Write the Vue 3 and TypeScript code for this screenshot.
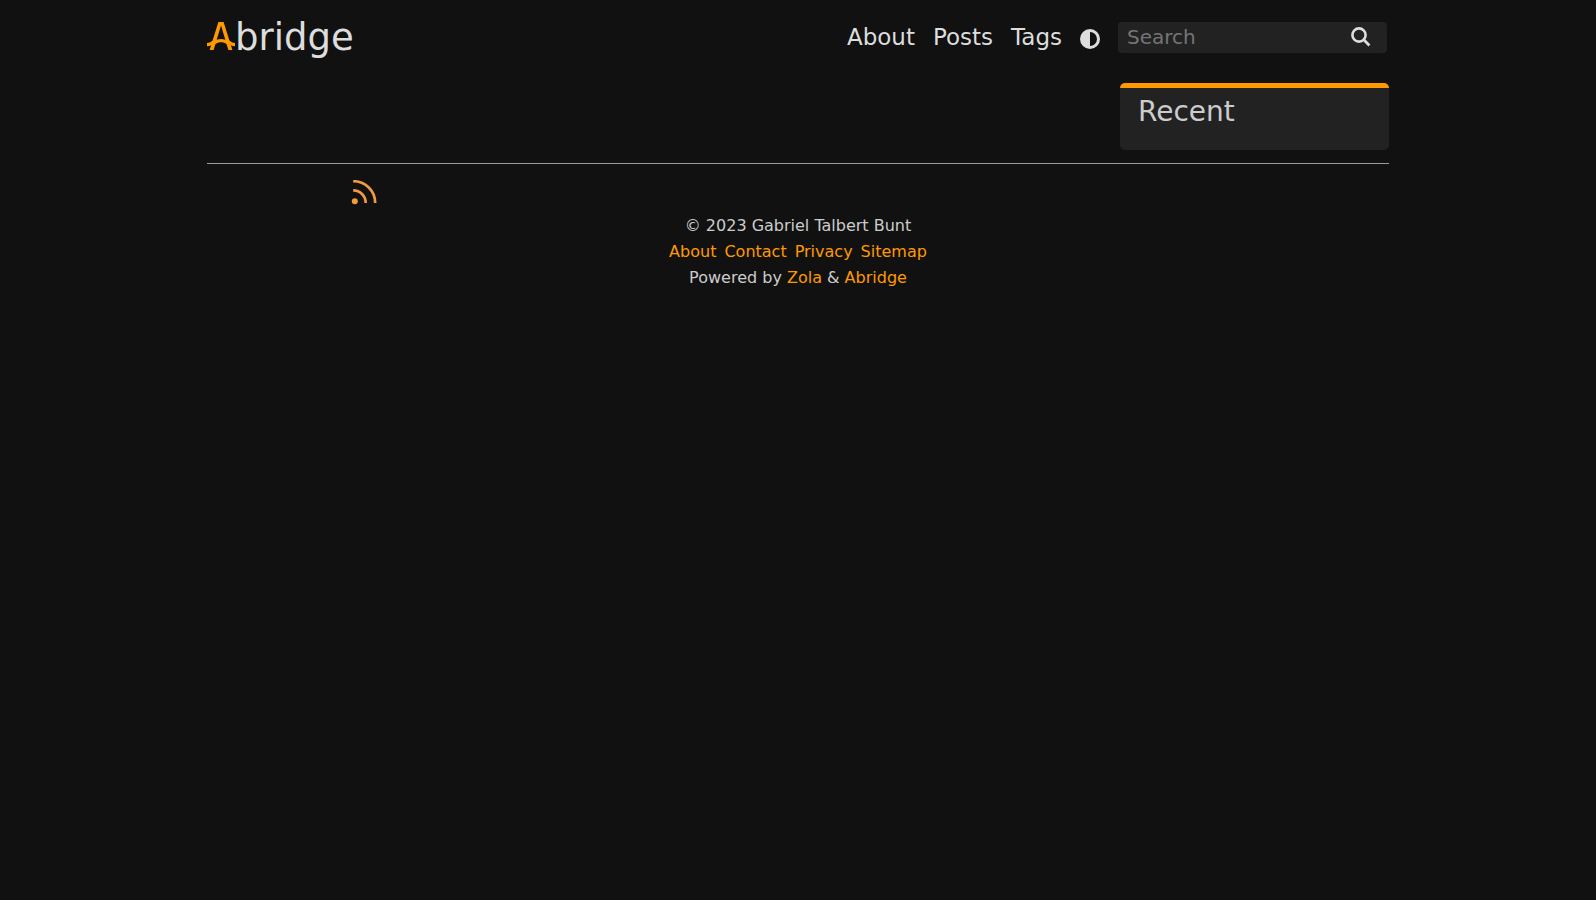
<script setup lang="ts">
import { ref } from 'vue'

interface NavLink {
  label: string
  href: string
}

const navLinks: NavLink[] = [
  { label: 'About', href: '#about' },
  { label: 'Posts', href: '#posts' },
  { label: 'Tags', href: '#tags' },
]

const footerLinks: NavLink[] = [
  { label: 'About', href: '#about' },
  { label: 'Contact', href: '#contact' },
  { label: 'Privacy', href: '#privacy' },
  { label: 'Sitemap', href: '#sitemap' },
]

const query = ref('')
</script>

<template>
  <div class="page">
    <header class="header">
      <a class="logo" href="#home" aria-label="Abridge">
        <svg class="logo-mark" viewBox="0 0 28 28" aria-hidden="true">
          <path fill="currentColor" d="M11.4 0 H16.6 L22.4 18.6 C24 20 25.8 20.8 28 21 V24.2 C26.4 24.2 25 23.8 23.9 23.2 L25.4 28 H21.4 L19.6 22.2 C16.4 19.6 11.6 19.6 8.4 22.2 L6.6 28 H2.6 L4.1 23.2 C3 23.8 1.6 24.2 0 24.2 V21 C2.2 20.8 4 20 5.6 18.6 Z M14 3.4 L9.7 17.8 C12.4 16.6 15.6 16.6 18.3 17.8 Z" fill-rule="evenodd" />
        </svg>
        <span>bridge</span>
      </a>
      <nav class="nav" aria-label="Main">
        <a v-for="link in navLinks" :key="link.label" :href="link.href">{{ link.label }}</a>
        <button class="theme" type="button" aria-label="Toggle theme">
          <svg viewBox="0 0 20 20" aria-hidden="true">
            <path fill="currentColor" fill-rule="evenodd" d="M10 0a10 10 0 1 0 0 20a10 10 0 0 0 0-20zM10 3a7 7 0 0 1 0 14z" />
          </svg>
        </button>
        <form class="search" role="search" @submit.prevent>
          <input v-model="query" type="search" placeholder="Search" aria-label="Search" />
          <button type="submit" aria-label="Submit search">
            <svg viewBox="0 0 20 20" aria-hidden="true">
              <circle cx="8" cy="8" r="6.6" fill="none" stroke="currentColor" stroke-width="2.6" />
              <path d="M12.6 12.6 L18.4 18.4" stroke="currentColor" stroke-width="2.8" />
            </svg>
          </button>
        </form>
      </nav>
    </header>

    <main class="main">
      <aside class="recent">
        <h2>Recent</h2>
      </aside>
    </main>

    <footer class="footer">
      <div class="feeds">
        <a href="#feed" aria-label="RSS feed">
          <svg viewBox="0 0 26 26" aria-hidden="true">
            <circle cx="3.8" cy="21.2" r="3" fill="currentColor" />
            <path d="M2.2 10.4 A12.5 12.5 0 0 1 14.7 22.9 M2.2 1.2 A22 21.7 0 0 1 24.2 22.9" fill="none" stroke="currentColor" stroke-width="2.7" />
          </svg>
        </a>
      </div>
      <p>© 2023 Gabriel Talbert Bunt</p>
      <nav class="footer-links" aria-label="Footer">
        <a v-for="link in footerLinks" :key="link.label" :href="link.href">{{ link.label }}</a>
      </nav>
      <p>Powered by <a href="#zola">Zola</a> &amp; <a href="#abridge">Abridge</a></p>
    </footer>
  </div>
</template>

<style>
body {
  background: #111;
}
</style>

<style scoped>
.page {
  box-sizing: border-box;
  max-width: 1182px;
  margin: 0 auto;
  color: #ccc;
  font: 16px/26px "DejaVu Sans", sans-serif;
}
a {
  color: #f90;
  text-decoration: none;
}
button {
  padding: 0;
  border: 0;
  background: none;
  color: #ddd;
  cursor: pointer;
}
svg {
  display: block;
}
.header {
  display: flex;
  align-items: center;
  justify-content: space-between;
  height: 75px;
}
.logo {
  display: flex;
  align-items: center;
  font-size: 37px;
  line-height: 42px;
}
.logo-mark {
  width: 28px;
  height: 28px;
  margin-bottom: 3px;
}
.logo span {
  color: #ddd;
}
.nav {
  display: flex;
  align-items: center;
  gap: 18px;
  margin-right: 2px;
}
.nav > a {
  padding-bottom: 2px;
  color: #ddd;
  font-size: 23px;
}
.theme {
  margin-top: 3px;
}
.theme svg {
  width: 20px;
  height: 20px;
}
.search {
  box-sizing: border-box;
  display: flex;
  align-items: center;
  width: 269px;
  height: 31px;
  padding: 0 16px 2px 9px;
  border-radius: 4px;
  background: #222;
}
.search input {
  flex: 1;
  min-width: 0;
  padding: 0;
  border: 0;
  outline: 0;
  background: none;
  color: #ddd;
  font: 20px/26px "DejaVu Sans", sans-serif;
}
.search input::placeholder {
  color: #757575;
}
.search svg {
  width: 20px;
  height: 20px;
}
.main {
  display: flex;
  justify-content: flex-end;
  padding: 8px 0 13px;
}
.recent {
  box-sizing: border-box;
  width: 269px;
  padding: 6px 18px 20px;
  border-top: 5px solid #f90;
  border-radius: 5px;
  background: #222;
}
.recent h2 {
  margin: 0;
  font-size: 28px;
  font-weight: 400;
  line-height: 36px;
}
.footer {
  border-top: 1px solid #999;
  text-align: center;
}
.feeds {
  display: flex;
  padding: 16px 0 7px 144px;
}
.feeds a {
  color: #f19b3f;
}
.feeds svg {
  width: 26px;
  height: 26px;
}
.footer p {
  margin: 0;
}
.footer-links {
  display: flex;
  justify-content: center;
  gap: 8px;
}
</style>
